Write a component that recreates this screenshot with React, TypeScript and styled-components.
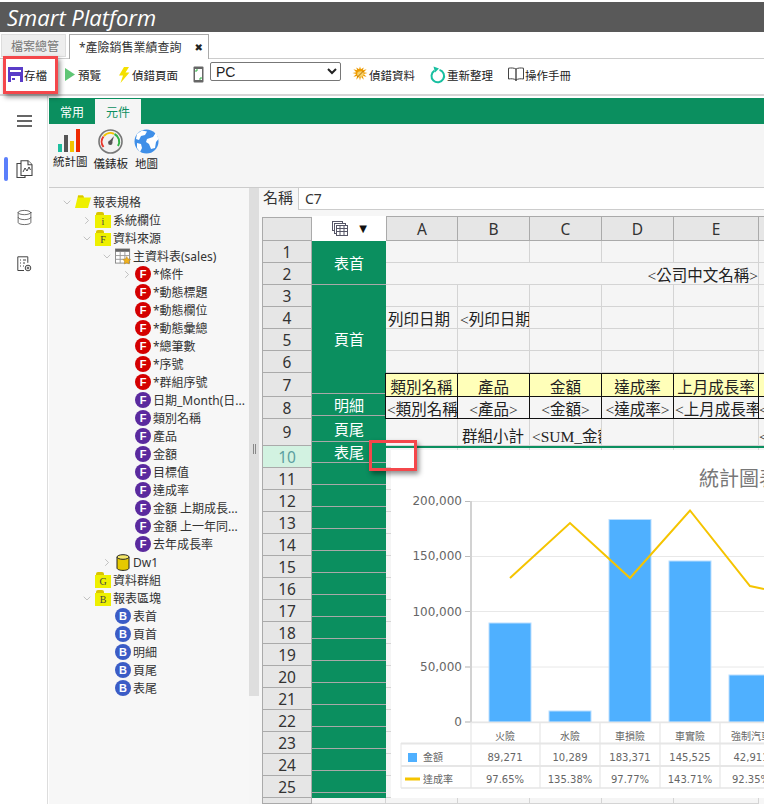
import React from 'react';
import styled, { createGlobalStyle } from 'styled-components';
import { ChevronDown, ChevronRight, Database } from 'lucide-react';

const CJK = `"Noto Sans", "Noto Sans CJK TC", sans-serif`;
const GREEN = '#0b8f5f';

const Global = createGlobalStyle`
  html, body { margin: 0; padding: 0; background: #fff; overflow: hidden; }
  * { box-sizing: border-box; }
`;

const Page = styled.div`
  position: relative; width: 764px; height: 804px; overflow: hidden;
  display: flex; flex-direction: column; font-family: ${CJK}; color: #222; background: #fff;
`;
const Header = styled.header`
  flex: none; height: 30px; margin-top: 2px; background: #595959; color: #fff;
  display: flex; align-items: center; padding-left: 7px;
  font: italic 400 22px/30px "Open Sans", sans-serif; letter-spacing: 0;
`;
const TabBar = styled.nav`
  flex: none; height: 27px; padding: 2px 0 0 1px; display: flex; gap: 3px; align-items: stretch;
  border-bottom: 1px solid #ccc;
`;
const Tab = styled.div<{ $active?: boolean }>`
  display: flex; align-items: center; justify-content: space-between; font-size: 12px;
  width: ${p => (p.$active ? '140px' : '65px')};
  padding: ${p => (p.$active ? '0 5px 0 9px' : '0 0 0 9px')};
  margin-bottom: ${p => (p.$active ? '-1px' : '1px')};
  background: ${p => (p.$active ? '#fff' : '#eee')};
  color: ${p => (p.$active ? '#333' : '#777')};
  border: 1px solid ${p => (p.$active ? '#aaa' : '#ddd')};
  border-bottom: ${p => (p.$active ? 'none' : '1px solid #ddd')};
`;
const CloseMark = styled.span`
  font: 700 10px "DejaVu Sans", sans-serif; color: #222;
`;
const Toolbar = styled.div`
  flex: none; height: 37px; display: flex; align-items: center; padding: 0 0 4px 8px;
  border-bottom: 2px solid #d6d6d6;
`;
const ToolButton = styled.div<{ $gap: number }>`
  display: flex; align-items: center; gap: 1px; font-size: 11.5px; white-space: nowrap;
  margin-right: ${p => p.$gap}px; color: #222;
`;
const ToolSelect = styled.select`
  width: 131px; height: 19px; margin: 0 11px 6px 0; padding: 0 0 0 1px;
  font: 14px/17px "Liberation Sans", sans-serif; color: #222; background: #fff;
  border: 1px solid #777; border-radius: 2px;
`;
const Body = styled.div`
  flex: 1; min-height: 0; display: flex;
`;
const SideRail = styled.aside`
  flex: none; width: 48px; margin-right: 1px; border-right: 1px solid #ddd;
  display: flex; flex-direction: column; align-items: center; position: relative;
`;
const RailSlot = styled.div<{ $h: number; $active?: boolean }>`
  width: 100%; height: ${p => p.$h}px; display: flex; align-items: center; justify-content: center;
  color: #555; position: relative; padding-left: 1px;
  &::before {
    content: ''; display: ${p => (p.$active ? 'block' : 'none')};
    position: absolute; left: 4px; top: 50%; width: 4px; height: 24px; margin-top: -12px;
    background: #5b7ffb; border-radius: 2px;
  }
`;
const Main = styled.main`
  flex: 1; min-width: 0; display: flex; flex-direction: column;
`;
const RibbonTabs = styled.div`
  flex: none; height: 26px; margin-top: 2px; background: ${GREEN}; display: flex; align-items: flex-end;
`;
const RibbonTab = styled.div<{ $active?: boolean }>`
  width: 46px; height: 25px; display: flex; align-items: center; justify-content: center; font-size: 12px;
  background: ${p => (p.$active ? '#f5f5f5' : 'transparent')};
  color: ${p => (p.$active ? GREEN : '#fff')};
`;
const RibbonPanel = styled.div`
  flex: none; height: 64px; background: #f5f5f5; border-bottom: 1px solid #ccc;
  display: flex; padding: 5px 0 0 3px; gap: 4px;
`;
const RibbonItem = styled.div`
  display: flex; flex-direction: column; align-items: center; font-size: 11.5px; line-height: 14px;
  gap: 3px; padding: 0 1px; color: #222; white-space: nowrap;
`;
const Workspace = styled.div`
  flex: 1; min-height: 0; display: flex; background: #f6f6f6;
`;
const Tree = styled.div`
  flex: none; width: 200px; padding-top: 5px; background: #f7f7f7;
`;
const TreeRow = styled.div<{ $level: number }>`
  height: 18px; display: flex; align-items: center; font-size: 12px; color: #333; white-space: nowrap;
  padding-left: ${p => 12 + p.$level * 20}px;
`;
const Caret = styled.span`
  flex: none; width: 12px; height: 12px; display: flex; align-items: center; justify-content: center; color: #aaa;
`;
const TreeIcon = styled.span`
  flex: none; width: 16px; height: 16px; margin: 0 2px; display: flex; align-items: center; justify-content: center;
`;
const Ball = styled.span<{ $bg: string }>`
  width: 16px; height: 16px; border-radius: 50%; background: ${p => p.$bg}; color: #fff;
  display: flex; align-items: center; justify-content: center;
  font: 700 11px/16px "Liberation Sans", sans-serif;
`;
const FolderBadge = styled.span`
  position: relative; width: 16px; height: 13px; margin-top: 3px; background: #eef000; color: #444;
  display: flex; align-items: center; justify-content: center; font: 400 10px/13px "Liberation Serif", serif;
  &::before {
    content: ''; position: absolute; left: 1px; top: -3px; width: 8px; height: 3px;
    background: #d9c400; border-radius: 2px 2px 0 0;
  }
`;
const SplitColumn = styled.div`
  flex: none; width: 11px; background: #f6f6f6;
`;
const Splitter = styled.div`
  height: 508px; background: #dedede; display: flex; align-items: center; justify-content: center;
  gap: 1px; padding-top: 14px; margin-right: 1px;
  &::before, &::after { content: ''; width: 1px; height: 10px; background: #888; }
`;
const Sheet = styled.section`
  flex: 1; min-width: 0; padding-left: 2px; display: flex; flex-direction: column;
`;
const NameRow = styled.div`
  flex: none; height: 23px; margin-top: -1px; margin-bottom: 1px; display: flex; align-items: flex-start;
  font-size: 15px; line-height: 20px; color: #333; gap: 5px; padding-left: 1px;
`;
const NameInput = styled.div`
  flex: 1; height: 23px; padding-left: 6px; background: #fff; border: 1px solid #ccc; border-right: none;
  font: 14px/21px "Noto Sans", sans-serif; color: #333;
`;
const GridWrap = styled.div`
  position: relative; flex: 1; min-height: 0; margin-top: 5px; overflow: hidden;
`;
const Grid = styled.div`
  display: grid; width: 600px;
  grid-template-columns: 50px 74px 72px 72px 72px 72px 85px 103px;
  grid-template-rows: 25px repeat(6, 22px) 24px 22px 27px repeat(16, 22px);
`;
const Corner = styled.div`
  background: #e6e6e6; border: 1px solid #aaa; margin-top: 1px;
`;
const SelectorCell = styled.div`
  background: #fff; display: flex; align-items: center; justify-content: center; gap: 11px; padding-left: 1px;
  font: 10px "DejaVu Sans", sans-serif; color: #111;
`;
const ColHead = styled.div`
  background: #e6e6e6; border: 1px solid #aaa; border-left: none; display: flex; align-items: center; justify-content: center;
  font: 15.5px "Noto Sans", sans-serif; color: #333;
  &:nth-child(3) { border-left: 1px solid #aaa; }
`;
const RowHead = styled.div<{ $current?: boolean }>`
  grid-column: 1;
  background: ${p => (p.$current ? '#d2f2e1' : '#e6e6e6')}; color: ${p => (p.$current ? '#5b9fa0' : '#333')};
  border: 1px solid #aaa; border-top: none; display: flex; align-items: center; justify-content: center;
  font: 15.5px "Noto Sans", sans-serif;
`;
const SectionColumn = styled.div`
  grid-column: 2; grid-row: 2 / -1; background: ${GREEN}; display: flex; flex-direction: column;
`;
const SectionBlock = styled.div<{ $h: number }>`
  flex: none; height: ${p => p.$h}px; color: #fff; border-bottom: 1px solid #a9a9a9;
  display: flex; align-items: center; justify-content: center; font-size: 15px; line-height: 18px;
`;
const Cell = styled.div<{ $span?: number; $kind?: 'plain' | 'head' | 'body'; $align?: string; $pad?: number; $low?: boolean }>`
  grid-column: span ${p => p.$span ?? 1}; min-width: 0; overflow: hidden; white-space: nowrap;
  display: flex; align-items: ${p => (p.$low ? 'flex-end' : 'center')};
  justify-content: ${p => p.$align ?? 'flex-start'};
  padding: 5px ${p => p.$pad ?? 2}px 0;
  font: 15.5px/${p => (p.$low ? 16 : 20)}px "Liberation Serif", "Noto Sans CJK TC", serif; color: #222;
  background: ${p => (p.$kind === 'head' ? '#ffffb9' : '#f5f5f5')};
  border-right: 1px solid ${p => (p.$kind === 'head' || p.$kind === 'body' ? '#111' : '#d4d4d4')};
  border-bottom: 1px solid ${p => (p.$kind === 'head' || p.$kind === 'body' ? '#111' : '#d4d4d4')};
  border-top: ${p => (p.$kind === 'head' ? '1px solid #111' : 'none')};
  ${p => (p.$kind === 'head' || p.$kind === 'body' ? 'box-shadow: -1px 0 0 #111;' : '')}
`;
const FreezeLine = styled.div`
  position: absolute; left: 124px; right: 0; top: 230px; height: 2px; background: ${GREEN};
`;
const ChartCard = styled.div`
  position: absolute; left: 129px; top: 234px; width: 373px; height: 348px; background: #fff;
`;
const Marker = styled.div<{ $x: number; $y: number; $w: number; $h: number }>`
  position: absolute; left: ${p => p.$x}px; top: ${p => p.$y}px; width: ${p => p.$w}px; height: ${p => p.$h}px;
  border: 3px solid #f4474b; box-shadow: 2px 3px 5px rgba(0,0,0,.45); pointer-events: none;
`;

/* ---- drawings ---- */
const SaveIcon = () => (
  <svg width="15" height="15" viewBox="0 0 15 15">
    <rect x="0" y="0" width="15" height="15" fill="#5a3cc8" />
    <rect x="2" y="3" width="11" height="2" fill="#fff" />
    <rect x="3" y="9" width="9" height="6" fill="#fff" />
    <rect x="4" y="11" width="3" height="2" fill="#5a3cc8" />
  </svg>
);
const PlayIcon = () => (
  <svg width="10" height="13" viewBox="0 0 10 13" style={{ marginRight: 2 }}><path d="M0 0 L10 6.5 L0 13Z" fill="#5fc675" /></svg>
);
const BoltIcon = () => (
  <svg width="12" height="16" viewBox="0 0 12 16" style={{ marginRight: 1 }}><path d="M6 0 L11 0 L7.5 5.5 L11.5 5.5 L2.5 16 L5 8.5 L1 8.5Z" fill="#f4e000" /></svg>
);
const DeviceIcon = () => (
  <svg width="11" height="17" viewBox="0 0 11 17"><rect x="0.5" y="0.5" width="10" height="16" rx="1" fill="#666" /><rect x="2" y="3" width="7" height="11" fill="#fff" /><path d="M3 6V4h2M8 11v2H6" fill="none" stroke="#2fb344" strokeWidth="1" /></svg>
);
const BugIcon = () => (
  <svg width="16" height="17" viewBox="0 0 17 17">
    <path d="M8.5 0l1 3 3-2-1 3 4-1-3 3 4 1-4 1 3 3-4-1 1 4-3-3-1 4-1-4-3 3 1-4-4 1 3-3-4-1 4-1-3-3 4 1-1-3 3 2z" fill="#ee9b00" />
    <ellipse cx="9" cy="8" rx="3.5" ry="3" fill="#f7d26a" />
    <path d="M6 11l6-6" stroke="#a86400" strokeWidth="1" />
  </svg>
);
const RefreshIcon = () => (
  <svg width="16" height="18" viewBox="0 0 16 18">
    <path d="M4.5 4.6 A6.3 6.3 0 1 0 9.5 3.9" fill="none" stroke="#18bfa0" strokeWidth="2" />
    <path d="M3.5 0.5 L9 2.5 L5 6.5Z" fill="#18bfa0" />
  </svg>
);
const BookIcon = () => (
  <svg width="16" height="15" viewBox="0 0 16 15" fill="none" stroke="#444" strokeWidth="1">
    <path d="M8 2 C6 0.8 3 0.8 0.5 1.2 V12 C3 11.6 6 11.6 8 13 C10 11.6 13 11.6 15.5 12 V1.2 C13 0.8 10 0.8 8 2Z" />
    <path d="M8 2 V14" strokeWidth="1.4" />
  </svg>
);
const HamburgerIcon = () => (
  <svg width="15" height="12" viewBox="0 0 15 12"><path d="M0 1h15M0 6h15M0 11h15" stroke="#666" strokeWidth="2" /></svg>
);
const DocChartIcon = () => (
  <svg width="17" height="18" viewBox="0 0 17 18" fill="#fff" stroke="#444" strokeWidth="1.1">
    <path d="M1 3.5h8v14H1z" />
    <path d="M5 .8h7l4 4v10.7H5z" />
    <path d="M12 .8v4h4" />
    <path d="M7 12l2-4 2 3 2-4 1.5 3" strokeWidth="1" />
  </svg>
);
const ReportIcon = () => (
  <svg width="15" height="16" viewBox="0 0 15 16" fill="none" stroke="#444" strokeWidth="1">
    <path d="M7 14.5H.8V.8h10v6" />
    <path d="M3 4h1M6 4h3M3 7h1M6 7h2M3 10h1M6 10h1" />
    <circle cx="11" cy="12" r="2.8" /><circle cx="11" cy="12" r="0.9" />
  </svg>
);
const BarsIcon = () => (
  <svg width="24" height="23" viewBox="0 0 24 23">
    <rect x="0" y="15" width="4" height="8" fill="#1dbf9f" />
    <rect x="6" y="6" width="4" height="17" fill="#555" />
    <rect x="12" y="12" width="4" height="11" fill="#f2c500" />
    <rect x="18" y="0" width="4" height="23" fill="#ee2a00" />
  </svg>
);
const GaugeIcon = () => (
  <svg width="25" height="25" viewBox="0 0 25 25">
    <circle cx="12.5" cy="12.5" r="11.5" fill="#f1f1f1" stroke="#777" strokeWidth="1.6" />
    <path d="M5.5 18 A8.5 8.5 0 0 1 5.5 7.5" fill="none" stroke="#e8372b" strokeWidth="2" />
    <path d="M5.8 7 A8.5 8.5 0 0 1 16 4.8" fill="none" stroke="#f2c500" strokeWidth="2" />
    <path d="M16.5 5 A8.5 8.5 0 0 1 20 17" fill="none" stroke="#2fb344" strokeWidth="2" />
    <path d="M16 7 L13.8 14.5 L10.8 12.8Z" fill="#555" />
    <circle cx="12.3" cy="13.7" r="2.2" fill="#555" />
  </svg>
);
const GlobeIcon = () => (
  <svg width="25" height="25" viewBox="0 0 25 25">
    <circle cx="12.5" cy="12.5" r="12" fill="#3f8fe8" />
    <path d="M8 1.5 L13 2.5 L11 6 L7 7 L5 11 L2 10 L3 5Z" fill="#fff" />
    <path d="M13 10 L19 8 L22 3.5 L24.5 10 L22 13 L21 19 L17 20 L15 15 L12 13Z" fill="#fff" />
    <path d="M3 14 L7 15 L8 19 L6 23 L3 19Z" fill="#fff" />
  </svg>
);
const RootFolder = () => (
  <svg width="16" height="16" viewBox="0 0 16 16"><path d="M3 1.5h5l1 2h7L13 14H0Z" fill="#eef000" /><path d="M3 1.5h5l1 2H3Z" fill="#d9c400" /></svg>
);
const TableStarIcon = () => (
  <svg width="17" height="17" viewBox="0 0 17 17">
    <rect x="0.5" y="0.5" width="15" height="15" fill="#fff" stroke="#888" />
    <rect x="0.5" y="0.5" width="15" height="3" fill="#666" />
    <path d="M5.5 3.5v12M10.5 3.5v12M.5 7.5h15M.5 11.5h15" stroke="#999" />
    <path d="M12.5 8.5l1.3 2.7 2.9.4-2.1 2 .5 2.9-2.6-1.4-2.6 1.4.5-2.9-2.1-2 2.9-.4z" fill="#f1b21c" stroke="#b9831a" strokeWidth=".5" />
  </svg>
);
const CylinderIcon = () => (
  <svg width="14" height="17" viewBox="0 0 14 17">
    <path d="M1 3v11c0 1.4 2.7 2.4 6 2.4s6-1 6-2.4V3Z" fill="#e5c900" stroke="#222" />
    <ellipse cx="7" cy="3" rx="6" ry="2.3" fill="#f4e66a" stroke="#222" />
  </svg>
);
const SheetsIcon = () => (
  <svg width="16" height="15" viewBox="0 0 16 15" fill="#fff" stroke="#556" strokeWidth="1">
    <rect x="0.5" y="0.5" width="10" height="9" />
    <rect x="2.5" y="2.5" width="11" height="10" />
    <rect x="4.5" y="4.5" width="11" height="10" />
    <path d="M4.5 7.5h11M4.5 10.5h11M8 4.5v10M12 4.5v10" />
  </svg>
);

/* ---- data ---- */
type TreeNode = { level: number; caret?: 'open' | 'closed'; icon: React.ReactNode; label: string };
const F = (c: string) => <Ball $bg={c}>F</Ball>;
const RED = '#d40000';
const PURPLE = '#5a2a9e';
const BLUE = '#3b5cc6';
const tree: TreeNode[] = [
  { level: 0, caret: 'open', icon: <RootFolder />, label: '報表規格' },
  { level: 1, caret: 'closed', icon: <FolderBadge>i</FolderBadge>, label: '系統欄位' },
  { level: 1, caret: 'open', icon: <FolderBadge>F</FolderBadge>, label: '資料來源' },
  { level: 2, caret: 'open', icon: <TableStarIcon />, label: '主資料表(sales)' },
  { level: 3, caret: 'closed', icon: F(RED), label: '*條件' },
  { level: 3, icon: F(RED), label: '*動態標題' },
  { level: 3, icon: F(RED), label: '*動態欄位' },
  { level: 3, icon: F(RED), label: '*動態彙總' },
  { level: 3, icon: F(RED), label: '*總筆數' },
  { level: 3, icon: F(RED), label: '*序號' },
  { level: 3, icon: F(RED), label: '*群組序號' },
  { level: 3, icon: F(PURPLE), label: '日期_Month(日...' },
  { level: 3, icon: F(PURPLE), label: '類別名稱' },
  { level: 3, icon: F(PURPLE), label: '產品' },
  { level: 3, icon: F(PURPLE), label: '金額' },
  { level: 3, icon: F(PURPLE), label: '目標值' },
  { level: 3, icon: F(PURPLE), label: '達成率' },
  { level: 3, icon: F(PURPLE), label: '金額 上期成長...' },
  { level: 3, icon: F(PURPLE), label: '金額 上一年同...' },
  { level: 3, icon: F(PURPLE), label: '去年成長率' },
  { level: 2, caret: 'closed', icon: <CylinderIcon />, label: 'Dw1' },
  { level: 1, icon: <FolderBadge>G</FolderBadge>, label: '資料群組' },
  { level: 1, caret: 'open', icon: <FolderBadge>B</FolderBadge>, label: '報表區塊' },
  { level: 2, icon: <Ball $bg={BLUE}>B</Ball>, label: '表首' },
  { level: 2, icon: <Ball $bg={BLUE}>B</Ball>, label: '頁首' },
  { level: 2, icon: <Ball $bg={BLUE}>B</Ball>, label: '明細' },
  { level: 2, icon: <Ball $bg={BLUE}>B</Ball>, label: '頁尾' },
  { level: 2, icon: <Ball $bg={BLUE}>B</Ball>, label: '表尾' },
];

type CellDef = { t?: string; span?: number; kind?: 'plain' | 'head' | 'body'; align?: string; pad?: number; low?: boolean };
const blank: CellDef = {};
const blanks = (n: number): CellDef[] => Array.from({ length: n }, () => blank);
const mid = 'center';
const sheetRows: CellDef[][] = [
  blanks(6),
  [{ t: '<公司中文名稱>', span: 5, align: 'flex-end', pad: 0 }, blank],
  blanks(6),
  [{ t: '列印日期' }, { t: '<列印日期' }, ...blanks(4)],
  blanks(6),
  blanks(6),
  ['類別名稱', '產品', '金額', '達成率', '上月成長率', '去年成長率'].map(t => ({ t, kind: 'head' as const, align: mid, pad: 0 })),
  ['<類別名稱>', '<產品>', '<金額>', '<達成率>', '<上月成長率>', '<去年成長率>'].map((t, i) => ({ t, kind: 'body' as const, align: i === 0 || i === 4 || i === 5 ? 'flex-start' : mid, pad: i === 5 ? 0 : 1 })),
  [blank, { t: '群組小計', pad: 4, low: true }, { t: '<SUM_金額>', pad: 2, low: true }, blank, blank, { t: '<', pad: 0, low: true }],
  ...Array.from({ length: 17 }, () => blanks(6)),
];
const sections: [string, number][] = [
  ['表首', 44], ['頁首', 109], ['明細', 22], ['頁尾', 26], ['表尾', 21],
  ...Array.from({ length: 16 }, (): [string, number] => ['', 22]),
];

const bars = [
  { x: 489, top: 623 }, { x: 549, top: 711 }, { x: 609, top: 519.5 }, { x: 669, top: 561 }, { x: 729, top: 675 },
];
const categories = [['火險', 505], ['水險', 570], ['車損險', 630], ['車實險', 690], ['強制汽車', 751]] as const;
const amounts = ['89,271', '10,289', '183,371', '145,525', '42,911'];
const rates = ['97.65%', '135.38%', '97.77%', '143.71%', '92.35%'];
const valueX = [505, 570, 630, 690, 751];

const Chart = () => (
  <svg width="373" height="348" viewBox="391 450 373 348">
    <text x="699" y="486" fontFamily='"Noto Sans CJK TC", sans-serif' fontSize="20" fill="#777">統計圖表</text>
    {[501.5, 556.5, 611.5, 667, 722].map(y => (
      <g key={y}>
        <line x1="465" x2="764" y1={y} y2={y} stroke="#e8e8e8" />
        <line x1="465" x2="471" y1={y} y2={y} stroke="#bbb" />
      </g>
    ))}
    <line x1="471" x2="471" y1="501" y2="722" stroke="#d2d2d2" strokeWidth="2" />
    <g fontFamily='"DejaVu Sans", sans-serif' fontSize="12" fill="#666" textAnchor="end">
      <text x="462" y="505">200,000</text>
      <text x="462" y="560">150,000</text>
      <text x="462" y="616">100,000</text>
      <text x="462" y="671">50,000</text>
      <text x="462" y="726">0</text>
    </g>
    {bars.map(b => (
      <rect key={b.x} x={b.x} y={b.top} width="42" height={722 - b.top} fill="#4fb0ff" stroke="#b9deff" strokeWidth="1" />
    ))}
    <polyline points="510,578 570,523 630,578 690,510.5 750,586 764,589" fill="none" stroke="#f5c400" strokeWidth="2" />
    <g stroke="#e6e6e6">
      <line x1="471" x2="764" y1="722.5" y2="722.5" strokeWidth="1.5" />
      <line x1="401" x2="764" y1="743.5" y2="743.5" strokeWidth="2" />
      <line x1="401" x2="764" y1="766" y2="766" strokeWidth="2" />
      <line x1="401" x2="764" y1="788" y2="788" strokeWidth="1.5" />
      <line x1="401" x2="401" y1="743" y2="788" />
      {[471, 540, 600, 660, 720].map(x => <line key={x} x1={x} x2={x} y1="722" y2="788" strokeWidth="1.2" />)}
    </g>
    <g fontFamily='"Noto Sans CJK TC", sans-serif' fontSize="10" fill="#666" textAnchor="middle">
      {categories.map(([c, x]) => <text key={c} x={x} y="740">{c}</text>)}
    </g>
    <g fontFamily='"DejaVu Sans", sans-serif' fontSize="10" fill="#666" textAnchor="middle">
      {amounts.map((a, i) => <text key={a} x={valueX[i]} y="761">{a}</text>)}
      {rates.map((a, i) => <text key={a} x={valueX[i]} y="783">{a}</text>)}
    </g>
    <rect x="408" y="753" width="9" height="9" fill="#4fb0ff" />
    <rect x="405" y="777.5" width="15" height="3" fill="#f5c400" />
    <g fontFamily='"Noto Sans CJK TC", sans-serif' fontSize="10" fill="#666">
      <text x="423" y="761">金額</text>
      <text x="423" y="783">達成率</text>
    </g>
  </svg>
);

export default function App() {
  return (
    <Page>
      <Global />
      <Header>Smart Platform</Header>
      <TabBar>
        <Tab>檔案總管</Tab>
        <Tab $active>*產險銷售業績查詢<CloseMark>✖</CloseMark></Tab>
      </TabBar>
      <Toolbar>
        <ToolButton $gap={18}><SaveIcon />存檔</ToolButton>
        <ToolButton $gap={17}><PlayIcon />預覽</ToolButton>
        <ToolButton $gap={15}><BoltIcon />偵錯頁面</ToolButton>
        <ToolButton $gap={6}><DeviceIcon /></ToolButton>
        <ToolSelect defaultValue="PC"><option value="PC">PC</option></ToolSelect>
        <ToolButton $gap={15}><BugIcon />偵錯資料</ToolButton>
        <ToolButton $gap={15}><RefreshIcon />重新整理</ToolButton>
        <ToolButton $gap={0}><BookIcon />操作手冊</ToolButton>
      </Toolbar>
      <Body>
        <SideRail>
          <RailSlot $h={50}><HamburgerIcon /></RailSlot>
          <RailSlot $h={46} $active><DocChartIcon /></RailSlot>
          <RailSlot $h={50}><Database size={17} strokeWidth={1.2} /></RailSlot>
          <RailSlot $h={44}><ReportIcon /></RailSlot>
        </SideRail>
        <Main>
          <RibbonTabs>
            <RibbonTab>常用</RibbonTab>
            <RibbonTab $active>元件</RibbonTab>
          </RibbonTabs>
          <RibbonPanel>
            <RibbonItem><BarsIcon />統計圖</RibbonItem>
            <RibbonItem><GaugeIcon />儀錶板</RibbonItem>
            <RibbonItem><GlobeIcon />地圖</RibbonItem>
          </RibbonPanel>
          <Workspace>
            <Tree>
              {tree.map(n => (
                <TreeRow key={n.label} $level={n.level}>
                  <Caret>
                    {n.caret === 'open' && <ChevronDown size={13} strokeWidth={1.4} />}
                    {n.caret === 'closed' && <ChevronRight size={13} strokeWidth={1.4} />}
                  </Caret>
                  <TreeIcon>{n.icon}</TreeIcon>
                  {n.label}
                </TreeRow>
              ))}
            </Tree>
            <SplitColumn><Splitter /></SplitColumn>
            <Sheet>
              <NameRow>名稱<NameInput>C7</NameInput></NameRow>
              <GridWrap>
                <Grid>
                  <Corner />
                  <SelectorCell><SheetsIcon />▼</SelectorCell>
                  {['A', 'B', 'C', 'D', 'E', 'F'].map(c => <ColHead key={c}>{c}</ColHead>)}
                  <SectionColumn>
                    {sections.map(([label, h], i) => <SectionBlock key={i} $h={h}>{label}</SectionBlock>)}
                  </SectionColumn>
                  {sheetRows.map((cells, r) => (
                    <React.Fragment key={r}>
                      <RowHead $current={r === 9}>{r < 25 ? r + 1 : ''}</RowHead>
                      {cells.map((c, i) => (
                        <Cell key={i} $span={c.span} $kind={c.kind} $align={c.align} $pad={c.pad} $low={c.low}>{c.t}</Cell>
                      ))}
                    </React.Fragment>
                  ))}
                </Grid>
                <FreezeLine />
                <ChartCard><Chart /></ChartCard>
              </GridWrap>
            </Sheet>
          </Workspace>
        </Main>
      </Body>
      <Marker $x={3} $y={56} $w={55} $h={38} />
      <Marker $x={369} $y={440} $w={48} $h={31} />
    </Page>
  );
}
